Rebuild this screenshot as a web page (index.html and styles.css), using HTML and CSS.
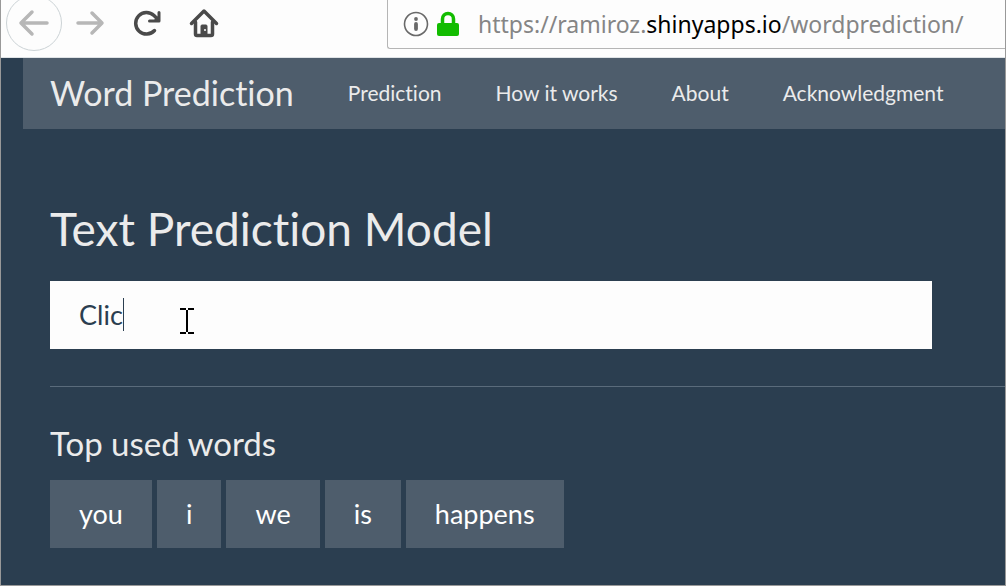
FILE: index.html
```html
<!DOCTYPE html>
<html lang="en">
<head>
<meta charset="utf-8">
<title>Word Prediction</title>
<link rel="stylesheet" href="styles.css">
</head>
<body>
<div class="window">
  <div class="toolbar">
    <div class="controls">
      <button class="control control-back" type="button" aria-label="Back">
        <svg width="32" height="28" viewBox="0 0 32 28" fill="none" stroke="#b7b7b7" stroke-width="3.500" stroke-linecap="round" stroke-linejoin="round"><path d="M14 3 3 14l11 11M4 14h25"/></svg>
      </button>
      <button class="control" type="button" aria-label="Forward">
        <svg width="30" height="28" viewBox="0 0 30 28" fill="none" stroke="#b7b7b7" stroke-width="3.500" stroke-linecap="round" stroke-linejoin="round"><path d="M17 4l10 10-10 10M3 14h23"/></svg>
      </button>
      <button class="control" type="button" aria-label="Reload">
        <svg width="30" height="28" viewBox="0 0 30 28" fill="none" stroke="#4a4a4a" stroke-width="3.500" stroke-linecap="round" stroke-linejoin="round"><path d="M22.500 21.500A10.800 10.800 0 1 1 22 6.500l3.500 3.500"/><path d="M27 3.500v8.500h-9.500" stroke-width="3"/><path d="M27 6v6h-6z" fill="#4a4a4a" stroke="none"/></svg>
      </button>
      <button class="control" type="button" aria-label="Home">
        <svg width="30" height="30" viewBox="0 0 30 30" fill="none" stroke="#4a4a4a" stroke-linecap="round" stroke-linejoin="round"><path d="M2.500 15.500 15 3l12.500 12.500" stroke-width="3.500"/><path d="M6.500 14v12q0 1.500 1.500 1.500h14q1.500 0 1.500-1.500V14" stroke-width="3.500"/><path d="M12 27v-9q0-1 1-1h4q1 0 1 1v9z" fill="#4a4a4a" stroke-width="1"/><circle cx="16" cy="22" r="1" fill="#fff" stroke="none"/></svg>
      </button>
    </div>
    <div class="address">
      <svg width="26" height="26" viewBox="0 0 26 26" aria-hidden="true"><circle cx="13" cy="13" r="11.500" fill="none" stroke="#696969" stroke-width="1.600"/><circle cx="13" cy="8" r="1.900" fill="#696969"/><path d="M13 13v5" stroke="#696969" stroke-width="3.800" stroke-linecap="round"/></svg>
      <svg class="lock" width="22" height="26" viewBox="0 0 22 26" aria-hidden="true"><path d="M5.500 13V8a5.500 5.500 0 0 1 11 0V13" fill="none" stroke="#12bc00" stroke-width="3.500"/><rect y="12" width="22" height="13" rx="2" fill="#12bc00"/></svg>
      <span class="url">https://ramiroz.<span class="domain">shinyapps.io</span>/wordprediction/</span>
    </div>
  </div>
  <div class="page">
    <nav class="navbar">
      <a class="brand" href="#">Word Prediction</a>
      <a class="nav-link" href="#prediction">Prediction</a>
      <a class="nav-link" href="#how">How it works</a>
      <a class="nav-link" href="#about">About</a>
      <a class="nav-link" href="#ack">Acknowledgment</a>
    </nav>
    <main class="content">
      <h1 class="title"><label for="phrase">Text Prediction Model</label></h1>
      <div class="field">
        <input class="phrase" id="phrase" type="text" value="Clic" autocomplete="off" spellcheck="false">
        <span class="caret"></span>
        <svg class="pointer" width="14" height="26" viewBox="0 0 14 26" fill="none" stroke="#000" stroke-width="2" aria-hidden="true"><path d="M0 1h6M8 1h6M0 25h6M8 25h6M7 2v22"/></svg>
      </div>
      <hr class="rule">
      <h2 class="subtitle">Top used words</h2>
      <div class="words">
        <button class="word" type="button">you</button>
        <button class="word" type="button">i</button>
        <button class="word" type="button">we</button>
        <button class="word" type="button">is</button>
        <button class="word" type="button">happens</button>
      </div>
    </main>
  </div>
</div>
</body>
</html>
```

FILE: styles.css
```css
* {
  box-sizing: border-box;
}

body {
  margin: 0;
  font-family: Lato, "Liberation Sans", sans-serif;
  font-variant-ligatures: none;
  color: #ebebeb;
}

.window {
  display: flex;
  flex-direction: column;
  min-height: 100vh;
  border: 1px solid #999;
  border-top: 0;
  background: #2b3e50;
  overflow: hidden;
}

.toolbar {
  display: flex;
  align-items: flex-start;
  justify-content: space-between;
  height: 58px;
  background: #fdfdfd;
  border-bottom: 1px solid #dfe3e6;
}

.controls {
  display: flex;
  align-items: center;
  gap: 27px;
  height: 46px;
  padding-left: 5px;
}

.control {
  display: flex;
  align-items: center;
  justify-content: center;
  padding: 0;
  border: 0;
  background: none;
}

.control-back {
  width: 56px;
  height: 56px;
  margin-right: -14px;
  border: 1px solid #ccd3d6;
  border-radius: 50%;
}

.address {
  display: flex;
  align-items: center;
  flex: 0 0 618px;
  height: 49px;
  padding-left: 15px;
  border: 1px solid #b5b5b5;
  border-width: 0 0 1px 1px;
  border-bottom-left-radius: 3px;
}

.lock {
  margin: 0 19px 0 8px;
}

.url {
  font-family: "Noto Sans", sans-serif;
  font-size: 23px;
  color: #858585;
  white-space: nowrap;
}

.domain {
  color: #000;
}

.navbar {
  display: flex;
  align-items: center;
  height: 71px;
  margin-left: 22px;
  padding: 0 0 2px 27px;
  background: #4e5d6c;
}

.brand,
.nav-link {
  color: #ebebeb;
  text-decoration: none;
  white-space: nowrap;
}

.brand {
  margin-right: 27px;
  font-size: 34px;
}

.nav-link {
  padding: 0 27px;
  font-size: 21px;
}

.content {
  padding: 72px 0 37px 49px;
}

.title,
.subtitle {
  margin: 0;
  font-weight: 400;
}

.title {
  font-size: 46px;
  line-height: 56px;
}

.field {
  position: relative;
  margin: 24px 73px 37px 0;
}

.phrase {
  display: block;
  width: 100%;
  height: 68px;
  padding: 0 29px 2px;
  border: 0;
  outline: 0;
  background: #fdfdfd;
  color: #2b3e50;
  font-family: inherit;
  font-size: 27px;
}

.caret {
  position: absolute;
  top: 17px;
  left: 73px;
  width: 1px;
  height: 33px;
  background: #2b3e50;
}

.pointer {
  position: absolute;
  top: 27px;
  left: 130px;
}

.rule {
  height: 1px;
  margin: 0 0 35px;
  border: 0;
  background: #5a6b7b;
}

.subtitle {
  font-size: 33px;
  line-height: 42px;
}

.words {
  display: flex;
  gap: 5px;
  margin-top: 16px;
}

.word {
  height: 68px;
  padding: 0 29px 2px;
  border: 0;
  background: #4e5d6c;
  color: #fff;
  font-family: inherit;
  font-size: 27px;
}
```
